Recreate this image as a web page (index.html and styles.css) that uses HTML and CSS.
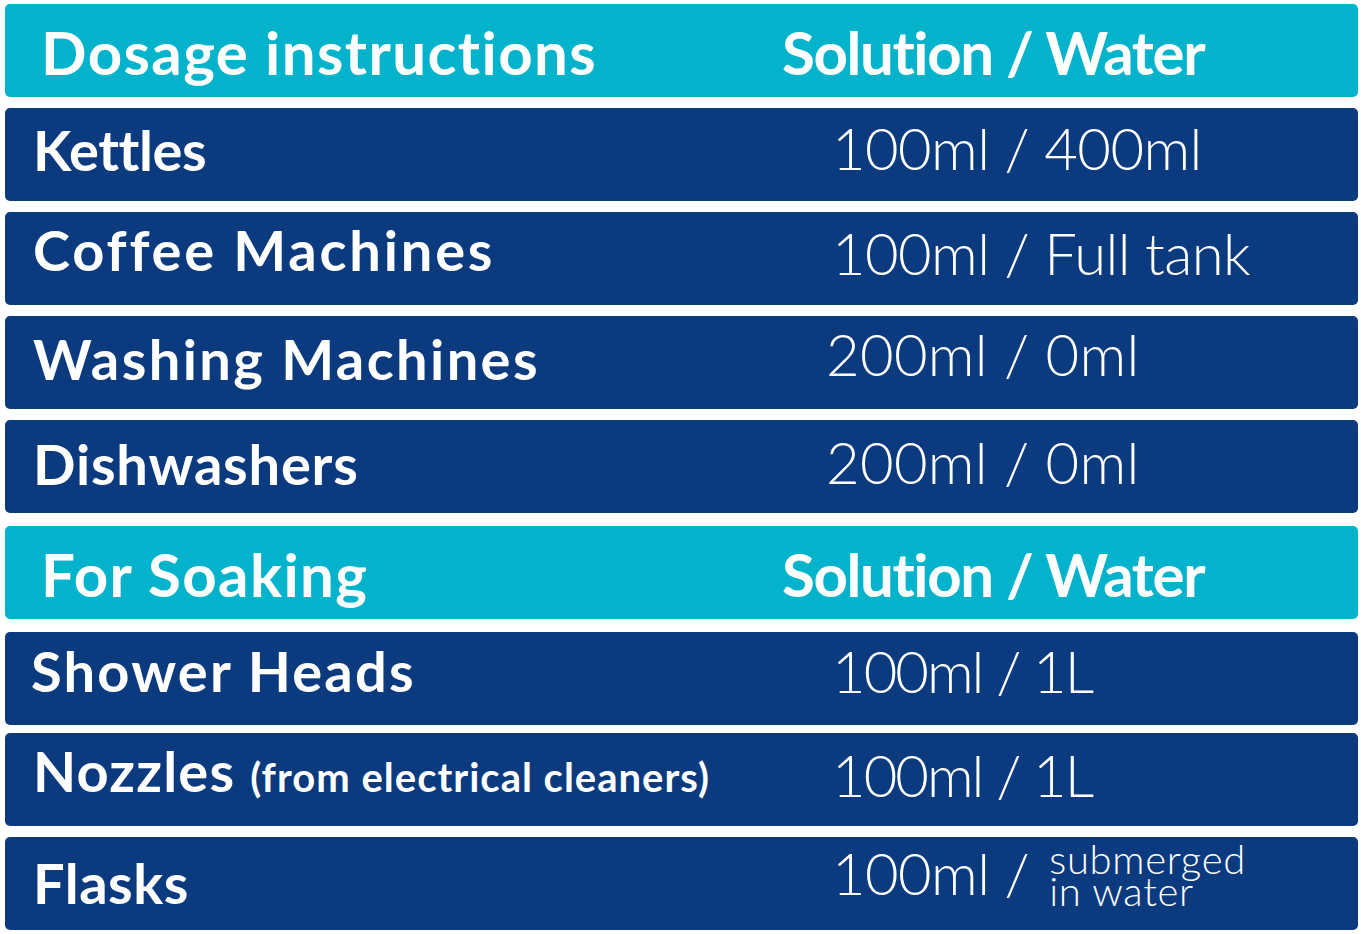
FILE: index.html
```html
<!DOCTYPE html>
<html lang="en">
<head>
<meta charset="utf-8">
<title>Dosage instructions</title>
<link rel="stylesheet" href="styles.css">
</head>
<body>
<main class="chart">
  <div class="row head">
    <div class="label">Dosage instructions</div>
    <div class="value">Solution / Water</div>
  </div>
  <div class="row item r-kettles">
    <div class="label">Kettles</div>
    <div class="value">100ml / 400ml</div>
  </div>
  <div class="row item r-coffee">
    <div class="label">Coffee Machines</div>
    <div class="value">100ml / Full tank</div>
  </div>
  <div class="row item r-washing">
    <div class="label">Washing Machines</div>
    <div class="value v-200">200ml / 0ml</div>
  </div>
  <div class="row item r-dish">
    <div class="label">Dishwashers</div>
    <div class="value v-200">200ml / 0ml</div>
  </div>
  <div class="row head head-soak">
    <div class="label">For Soaking</div>
    <div class="value">Solution / Water</div>
  </div>
  <div class="row item r-shower">
    <div class="label">Shower Heads</div>
    <div class="value v-litre">100ml / 1L</div>
  </div>
  <div class="row item r-nozzles">
    <div class="label"><span class="main">Nozzles</span><span class="note">(from electrical cleaners)</span></div>
    <div class="value v-litre">100ml / 1L</div>
  </div>
  <div class="row item r-flasks">
    <div class="label">Flasks</div>
    <div class="value flex-value"><span class="amount">100ml /</span><span class="small"><span class="line">submerged</span><span class="line">in water</span></span></div>
  </div>
</main>
</body>
</html>
```

FILE: styles.css
```css
html, body {
  margin: 0;
  padding: 0;
  background: #ffffff;
}

.chart {
  width: 1353px;
  margin-left: 5px;
  padding-top: 4px;
  display: flex;
  flex-direction: column;
  gap: 11px;
  font-family: "Lato", "Liberation Sans", sans-serif;
  color: #ffffff;
}

.row {
  height: 93px;
  border-radius: 5px;
  display: flex;
  align-items: center;
  box-sizing: border-box;
  white-space: nowrap;
}

.head {
  background: #03b3cb;
}

.item {
  background: #0b3a7e;
}

.head-soak {
  margin-top: 2px;
  margin-bottom: 2px;
}

.r-nozzles {
  margin-top: -3px;
}

.label {
  width: 795px;
  flex: none;
  box-sizing: border-box;
}

.value {
  box-sizing: border-box;
}

/* header rows */
.head .label {
  padding-left: 36px;
  padding-top: 2px;
  font-size: 60px;
  font-weight: 700;
  letter-spacing: 1.4px;
}

.head .value {
  padding-left: 777px;
  padding-top: 2px;
  margin-left: -795px;
  font-size: 60px;
  font-weight: 700;
  letter-spacing: -1.4px;
}

/* item rows */
.item .label {
  padding-left: 28px;
  font-size: 56px;
  font-weight: 700;
}

.item .value {
  padding-left: 32px;
  font-size: 58px;
  font-weight: 300;
  letter-spacing: -0.6px;
}

.item .value.v-200 {
  padding-left: 26px;
  letter-spacing: 0.3px;
}

.item .value.v-litre {
  letter-spacing: -2px;
}

.r-kettles .label  { letter-spacing: -0.4px; padding-bottom: 11px; }
.r-kettles .value  { padding-bottom: 14px; }

.r-coffee .label   { letter-spacing: 2.8px; padding-bottom: 18px; }
.r-coffee .value   { padding-bottom: 12px; }

.r-washing .label  { letter-spacing: 2.4px; padding-bottom: 9px; }
.r-washing .value  { padding-bottom: 18px; }

.r-dish .label     { letter-spacing: 0.8px; padding-bottom: 6px; }
.r-dish .value     { padding-bottom: 11px; }

.r-shower .label   { letter-spacing: 2.2px; padding-bottom: 17px; padding-left: 26px; }
.r-shower .value   { padding-bottom: 17px; }

.r-nozzles .label  { padding-bottom: 18px; }
.r-nozzles .value  { padding-bottom: 10px; }

.r-flasks .label   { letter-spacing: 0.5px; padding-bottom: 3px; }
.r-flasks .value   { padding-bottom: 23px; }

.r-nozzles .main {
  letter-spacing: 1.2px;
}

.note {
  margin-left: 15px;
  font-size: 40px;
  letter-spacing: 1px;
}

.flex-value {
  display: flex;
  align-items: center;
}

.small {
  display: flex;
  flex-direction: column;
  margin-left: 20px;
  margin-top: 6px;
  font-size: 40px;
  letter-spacing: 0.7px;
}

.line {
  display: block;
  height: 32px;
  line-height: 32px;
}
```
